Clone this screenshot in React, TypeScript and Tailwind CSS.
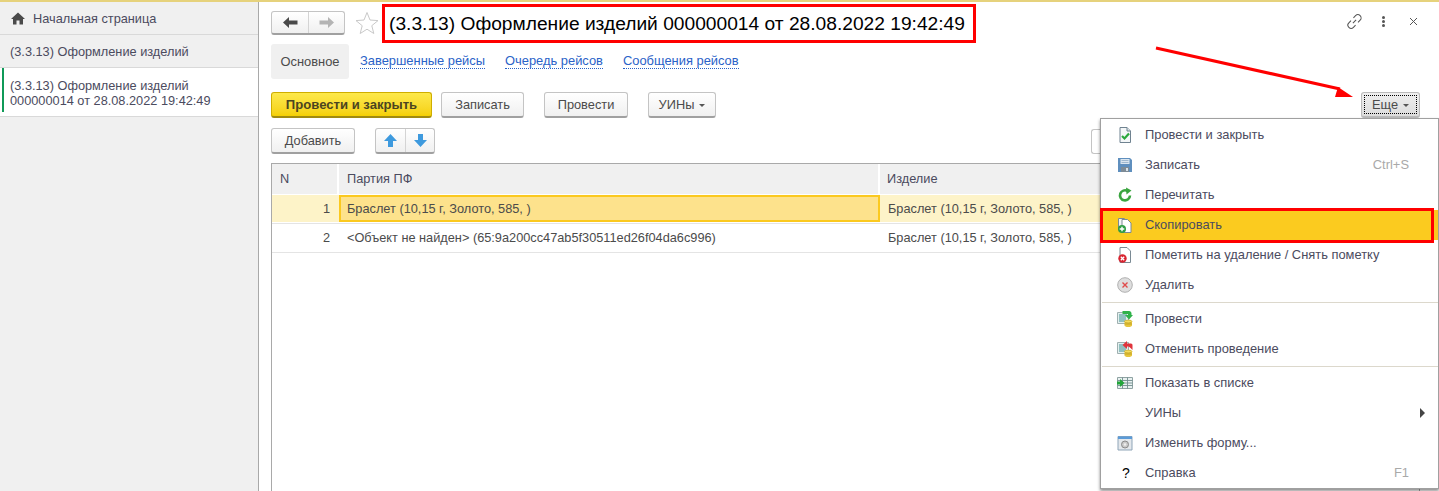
import React from "react";

const F = "font-['Liberation_Sans',Arial,sans-serif]";

function Btn({ children, className = "" }: { children: React.ReactNode; className?: string }) {
  return (
    <div className={`h-[26px] flex items-center justify-center rounded-[3px] border border-[#c4c4c4] border-b-[#a0a0a0] border-b-2 bg-gradient-to-b from-white to-[#f0f0f0] text-[12.8px] text-[#4b4b4b] ${className}`}>
      {children}
    </div>
  );
}

function Ic({ children }: { children: React.ReactNode }) {
  return <svg width="16" height="16" viewBox="0 0 16 16" className="block">{children}</svg>;
}

const Page = (
  <path d="M3 .5h7l3.5 3.5v11.5H3z" fill="#fff" stroke="#7a8a94" />
);

const Ledger = (
  <>
    <path d="M.5 1.5h11v11H.5z" fill="#e4f0f0" stroke="#9fb0b0" />
    <path d="M2 4h8M2 6h7M2 8h7M2 10h6" stroke="#3f9090" />
    <path d="M7.500 10.500h7.500v4c0 .8-1.500 1.500-3.750 1.500s-3.750-.7-3.750-1.500z" fill="#e6c53c" />
    <ellipse cx="11.250" cy="10.500" rx="3.750" ry="1.400" fill="#f5dc5c" stroke="#b99a1e" strokeWidth=".6" />
    <path d="M7.500 13h7.500" stroke="#b99a1e" strokeWidth=".7" />
  </>
);

const icons: Record<string, React.ReactNode> = {
  post: <Ic><path d="M3 .5h7l3.500 3.500v11.500H3z" fill="#f4f7f8" stroke="#6f8290" /><path d="M10 .5v3.500h3.500" fill="#dbe3e8" stroke="#6f8290" /><path d="M5 9l2.500 2.500L12 6.500" fill="none" stroke="#2aa83c" strokeWidth="2.200" /></Ic>,
  save: <Ic><path d="M1 1h12l2 2v12H1z" fill="#5f8fbe" /><path d="M3.500 2h9v5h-9z" fill="#dbe6f0" /><path d="M4.500 3.500h7M4.500 5.500h7" stroke="#9fb8cf" /><path d="M4 10h8v5H4z" fill="#7d8b96" /><path d="M9 11h2v3H9z" fill="#d9e2e8" /></Ic>,
  reload: <Ic><path d="M13 8.500A5 5 0 1 1 10.500 4" fill="none" stroke="#3aa53f" strokeWidth="2.600" /><path d="M9 .5L14.500 3.500 9.500 7.500z" fill="#3aa53f" /></Ic>,
  copy: <Ic><path d="M1.500 1.500h6v11h-6z" fill="#f2f2f2" stroke="#7a8a94" /><path d="M5 2.500h5.500L14 6v9.500H5z" fill="#fff" stroke="#7a8a94" /><circle cx="5" cy="12" r="4" fill="#2f9e44" /><path d="M5 9.700v4.600M2.700 12h4.600" stroke="#fff" strokeWidth="1.400" /></Ic>,
  mark: <Ic>{Page}<circle cx="5.500" cy="11.500" r="4.200" fill="#d8232f" /><path d="M3.800 9.800l3.400 3.400M7.200 9.800l-3.400 3.400" stroke="#fff" strokeWidth="1.300" /></Ic>,
  del: <Ic><circle cx="8" cy="8" r="7.300" fill="#dedede" stroke="#b0b0b0" /><path d="M5.500 5.500l5 5M10.500 5.500l-5 5" stroke="#e04b4b" strokeWidth="1.400" /></Ic>,
  doPost: <Ic>{Ledger}<path d="M5.500 0h6.500c1.500 0 2.500 1 2.500 2.500v1.500h1.500L12 8.500 8 4h3V3H5.500z" fill="#2fb24a" /></Ic>,
  unPost: <Ic>{Ledger}<path d="M10 0L5.500 4 10 8V5.500h1.500l2 1.500 2 2V4c0-1-1-1.500-2-1.500H10z" fill="#e0343c" /></Ic>,
  list: <Ic><path d="M.5 2.500h15v11H.5z" fill="#e8f0f0" stroke="#8fa3a3" /><path d="M5.500 2.500v11M10.500 2.500v11M.5 5.500h15M.5 8h15M.5 10.500h15" stroke="#6f8c8c" strokeWidth=".9" /><path d="M0 6.500h3V4l4.500 4L3 12V9.500H0z" fill="#21a63a" /></Ic>,
  form: <Ic><path d="M1 1.500h14v13.500H1z" fill="#e4e8ec" stroke="#8fa5b8" /><path d="M1 1.500h14V4H1z" fill="#5b9bd8" /><circle cx="8" cy="9.500" r="3.500" fill="#c9c9c9" stroke="#8a8a8a" /><circle cx="8" cy="9.500" r="1.300" fill="#eee" /></Ic>,
};

type Item = { t: string; icon?: string; hint?: string };

function MenuRow({ t, icon, hint, arrow, active }: Item & { arrow?: boolean; active?: boolean }) {
  return (
    <div className={`relative h-[30px] flex items-center text-[12.9px] text-[#4b4b5e] ${active ? "bg-[#fbcb1f]" : ""}`}>
      <div className="w-[44px] pl-[16px] flex items-center">{icon && icons[icon]}</div>
      <span>{t}</span>
      {hint && <span className="ml-auto mr-[29px] text-[#a9a9a9]">{hint}</span>}
      {arrow && <span className="ml-auto mr-[13px] w-0 h-0 border-y-[5px] border-y-transparent border-l-[5px] border-l-[#444]" />}
    </div>
  );
}

const linkCls = "self-center text-[#2a62c8] border-b border-dotted border-[#2a62c8] leading-[14px] text-[12.9px]";

export default function App() {
  return (
    <div className={`${F} w-[1439px] h-[491px] overflow-hidden relative bg-white flex flex-col`}>
      <div className="h-[2px] bg-[#e6d27c] shrink-0" />
      <div className="flex flex-1 min-h-0">
        {/* Sidebar */}
        <aside className="w-[259px] shrink-0 bg-[#f0f0f0] border-r border-[#a9a9a9] text-[12.75px] text-[#4b4b5e]">
          <div className="h-[33px] flex items-center pl-[11px] pt-[1px] border-b border-[#d9d9d9]">
            <svg width="14" height="13" viewBox="0 0 14 13" className="mr-[8px]"><path d="M7 .5L0 7h2v5.500h3.500V8.500h3v4H12V7h2z" fill="#4a4a4a" /></svg>
            Начальная страница
          </div>
          <div className="h-[33px] flex items-center pl-[10px] pt-[1px] border-b border-[#d9d9d9]">(3.3.13) Оформление изделий</div>
          <div className="h-[49px] flex items-stretch bg-white border-b border-[#d9d9d9]">
            <div className="w-[2px] ml-[2px] bg-[#0f9a58] h-[44px]" />
            <div className="pl-[6px] pt-[10px] leading-[15px]">(3.3.13) Оформление изделий<br />000000014 от 28.08.2022 19:42:49</div>
          </div>
        </aside>

        {/* Main */}
        <main className="flex-1 min-w-0 pl-[12px] pr-[19px] flex flex-col">
          <div className="h-[42px] flex items-center shrink-0">
            <div className="h-[24px] w-[74px] flex rounded-[3px] border border-[#c4c4c4] border-b-[#a0a0a0] border-b-2 bg-gradient-to-b from-white to-[#f0f0f0]">
              <div className="w-[37px] flex items-center justify-center border-r border-[#d4d4d4]">
                <svg width="15" height="11" viewBox="0 0 15 11"><path d="M6 0v3.500h8.500v4H6V11L0 5.500z" fill="#4a4a4a" /></svg>
              </div>
              <div className="flex-1 flex items-center justify-center">
                <svg width="15" height="11" viewBox="0 0 15 11"><path d="M9 0v3.500H.5v4H9V11l6-5.500z" fill="#b4b4b4" /></svg>
              </div>
            </div>
            <svg width="24" height="24" viewBox="0 0 24 24" className="ml-[10px]"><path d="M12 1.500l3 7.500 8 .6-6.200 5.100 2 7.800L12 18.200l-6.800 4.300 2-7.800L1 9.600 9 9z" fill="#fff" stroke="#c9c9c9" strokeWidth="1" /></svg>
            <h1 className="ml-[10px] mt-[2px] text-[19.2px] font-normal text-black whitespace-nowrap leading-none">(3.3.13) Оформление изделий 000000014 от 28.08.2022 19:42:49</h1>
            <div className="ml-auto flex items-center mb-[3px]">
              <svg width="17" height="17" viewBox="0 0 16 16" fill="none" stroke="#555" strokeWidth="1" className="mr-[19px]"><path d="M6.500 9.500l3-3M7 4.500l2-2a3 3 0 0 1 4.300 4.300l-2 2M9 11.500l-2 2a3 3 0 0 1-4.300-4.300l2-2" /></svg>
              <div className="flex flex-col gap-[1px] mr-[24px]">
                <i className="block w-[3px] h-[3px] rounded-full bg-[#555]" />
                <i className="block w-[3px] h-[3px] rounded-full bg-[#555]" />
                <i className="block w-[3px] h-[3px] rounded-full bg-[#555]" />
              </div>
              <svg width="9" height="9" viewBox="0 0 9 9" stroke="#555" className="mr-[2px]"><path d="M1 1l7 7M8 1l-7 7" /></svg>
            </div>
          </div>

          <div className="h-[35px] flex items-stretch shrink-0">
            <div className="w-[78px] rounded-[3px] bg-[#f0f0f0] flex items-center justify-center text-[#4b4b4b] text-[12.9px]">Основное</div>
            <a className={`ml-[11px] ${linkCls}`}>Завершенные рейсы</a>
            <a className={`ml-[20px] ${linkCls}`}>Очередь рейсов</a>
            <a className={`ml-[20px] ${linkCls}`}>Сообщения рейсов</a>
          </div>

          <div className="mt-[13px] flex items-center shrink-0">
            <div className="h-[26px] w-[161px] flex items-center justify-center rounded-[3px] border border-[#cfae00] border-b-[#a08a10] border-b-2 bg-gradient-to-b from-[#fde94a] to-[#f5d000] text-[13.1px] font-bold text-[#4b4420]">Провести и закрыть</div>
            <Btn className="ml-[9px] w-[83px]">Записать</Btn>
            <Btn className="ml-[20px] w-[84px]">Провести</Btn>
            <Btn className="ml-[20px] w-[68px]">УИНы <span className="ml-[5px] mt-[1px] w-0 h-0 border-x-[3px] border-x-transparent border-t-[3px] border-t-[#555]" /></Btn>
            <Btn className="ml-auto w-[59px] !border-[#bbb] !from-[#efefef] !to-[#dcdcdc] relative">
              <span className="absolute inset-[2px] border border-dotted border-black" />
              Еще <span className="ml-[5px] mt-[1px] w-0 h-0 border-x-[3px] border-x-transparent border-t-[3px] border-t-[#555]" />
            </Btn>
          </div>

          <div className="mt-[10px] flex items-center shrink-0">
            <Btn className="w-[84px]">Добавить</Btn>
            <div className="ml-[20px] h-[26px] w-[60px] flex rounded-[3px] border border-[#c4c4c4] border-b-[#a0a0a0] border-b-2 bg-gradient-to-b from-white to-[#f0f0f0]">
              <div className="w-[30px] flex items-center justify-center border-r border-[#d4d4d4]">
                <svg width="13" height="13" viewBox="0 0 13 13"><path d="M6.500 0L13 7H9v6H4V7H0z" fill="#3e9ade" /></svg>
              </div>
              <div className="flex-1 flex items-center justify-center">
                <svg width="13" height="13" viewBox="0 0 13 13"><path d="M6.500 13L13 6H9V0H4v6H0z" fill="#3e9ade" /></svg>
              </div>
            </div>
          </div>

          <div className="mt-[9px] flex-1 border-x border-t border-[#a9a9a9] text-[12.75px] text-[#4b4b4b] min-h-0">
            <div className="h-[30px] flex bg-[#f0f0f0] text-[#4b4b5e]">
              <div className="w-[67px] flex items-center pl-[8px] border-r-2 border-white">N</div>
              <div className="w-[541px] flex items-center pl-[8px] border-r-2 border-white">Партия ПФ</div>
              <div className="flex-1 flex items-center pl-[7px]">Изделие</div>
            </div>
            <div className="h-[29px] flex bg-[#fdf3c8] border-y border-white">
              <div className="w-[67px] flex items-center justify-end pr-[9px]">1</div>
              <div className="w-[541px] flex items-center pl-[6px] bg-[#fde28c] border-2 border-[#fbc91f]">Браслет (10,15 г, Золото, 585, )</div>
              <div className="flex-1 flex items-center pl-[8px]">Браслет (10,15 г, Золото, 585, )</div>
            </div>
            <div className="h-[30px] flex border-y border-[#e4e4e4]">
              <div className="w-[67px] flex items-center justify-end pr-[9px]">2</div>
              <div className="w-[541px] flex items-center pl-[8px]">&lt;Объект не найден&gt; (65:9a200cc47ab5f30511ed26f04da6c996)</div>
              <div className="flex-1 flex items-center pl-[8px]">Браслет (10,15 г, Золото, 585, )</div>
            </div>
          </div>
        </main>
      </div>

      {/* Title highlight */}
      <div className="absolute left-[382px] top-[4px] w-[594px] h-[39px] border-[3px] border-[#ff0000]" />

      {/* Arrow */}
      <svg className="absolute left-[1150px] top-[42px]" width="210" height="60" viewBox="0 0 210 60">
        <path d="M6 6L190 47" stroke="#ff0000" strokeWidth="3" />
        <path d="M203 55L188 45 185 55z" fill="#ff0000" />
      </svg>

      {/* Partly hidden search box edge */}
      <div className="absolute left-[1091px] top-[129px] w-[9px] h-[25px] border border-r-0 border-[#c4c4c4] rounded-l-[3px] bg-white" />

      {/* Dropdown */}
      <div className="absolute left-[1100px] top-[118px] w-[339px] h-[371px] bg-white border border-[#a0a0a0] shadow-[0_2px_3px_rgba(0,0,0,0.45)] pt-[1px]">
        <MenuRow t="Провести и закрыть" icon="post" />
        <MenuRow t="Записать" icon="save" hint="Ctrl+S" />
        <MenuRow t="Перечитать" icon="reload" />
        <MenuRow t="Скопировать" icon="copy" active />
        <MenuRow t="Пометить на удаление / Снять пометку" icon="mark" />
        <MenuRow t="Удалить" icon="del" />
        <div className="h-[4px] flex items-center"><div className="h-px w-full bg-[#dcd8cc] ml-[1px]" /></div>
        <MenuRow t="Провести" icon="doPost" />
        <MenuRow t="Отменить проведение" icon="unPost" />
        <div className="h-[4px] flex items-center"><div className="h-px w-full bg-[#dcd8cc] ml-[1px]" /></div>
        <MenuRow t="Показать в списке" icon="list" />
        <MenuRow t="УИНы" arrow />
        <MenuRow t="Изменить форму..." icon="form" />
        <div className="relative h-[30px] flex items-center text-[12.9px] text-[#4b4b5e]">
          <div className="w-[44px] pl-[21px] text-[14px] text-black">?</div>
          <span>Справка</span>
          <span className="ml-auto mr-[29px] text-[#a9a9a9]">F1</span>
        </div>
      </div>

      {/* Copy highlight */}
      <div className="absolute left-[1100px] top-[208px] w-[334px] h-[35px] border-[3px] border-[#ff0000]" />
    </div>
  );
}
